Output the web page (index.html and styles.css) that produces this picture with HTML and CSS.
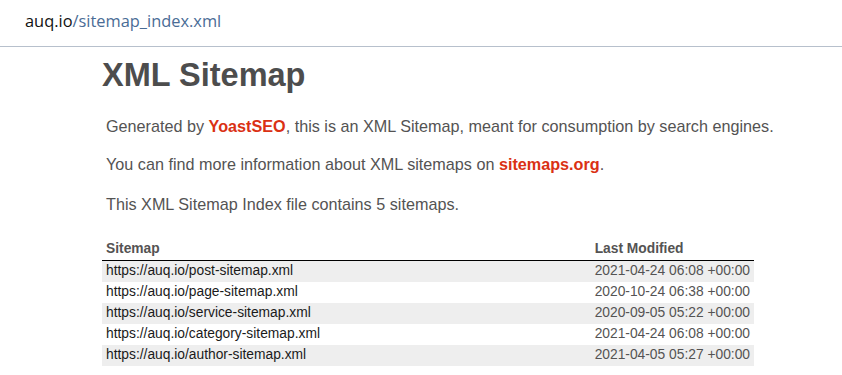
FILE: index.html
```html
<!DOCTYPE html>
<html>
<head>
<meta charset="utf-8">
<link rel="stylesheet" href="styles.css">
<title>XML Sitemap</title>
</head>
<body>
<div class="urlbar"><span class="host">auq.io</span><span class="path">/sitemap_index.xml</span></div>
<div class="content">
  <h1 class="title">XML Sitemap</h1>
  <p class="expl first">Generated by <a href="#">YoastSEO</a>, this is an XML Sitemap, meant for consumption by search engines.</p>
  <p class="expl second">You can find more information about XML sitemaps on <a href="#">sitemaps.org</a>.</p>
  <p class="expl third">This XML Sitemap Index file contains 5 sitemaps.</p>
  <table class="sitemap">
    <thead>
      <tr><th class="col-url">Sitemap</th><th class="col-date">Last Modified</th></tr>
    </thead>
    <tbody>
      <tr><td><a href="#">https://auq.io/post-sitemap.xml</a></td><td class="date">2021-04-24 06:08 +00:00</td></tr>
      <tr><td><a href="#">https://auq.io/page-sitemap.xml</a></td><td class="date">2020-10-24 06:38 +00:00</td></tr>
      <tr><td><a href="#">https://auq.io/service-sitemap.xml</a></td><td class="date">2020-09-05 05:22 +00:00</td></tr>
      <tr><td><a href="#">https://auq.io/category-sitemap.xml</a></td><td class="date">2021-04-24 06:08 +00:00</td></tr>
      <tr><td><a href="#">https://auq.io/author-sitemap.xml</a></td><td class="date">2021-04-05 05:27 +00:00</td></tr>
    </tbody>
  </table>
</div>
</body>
</html>
```
FILE: styles.css
```css
html, body {
  margin: 0;
  padding: 0;
  background: #fff;
}
body {
  font-family: "Liberation Sans", Arial, sans-serif;
  color: #545353;
}
.urlbar {
  height: 47px;
  box-sizing: border-box;
  padding: 9px 0 0 25px;
  border-bottom: 1px solid #b7c0cc;
  font-family: "Open Sans", "Noto Sans", sans-serif;
  font-size: 16.4px;
  line-height: 24px;
}
.host { color: #111; }
.path { color: #4a6c96; }
.content {
  margin: 0 0 0 102px;
}
.title {
  margin: 8px 0 0 0;
  font-size: 32.5px;
  line-height: 40px;
  font-weight: bold;
  color: #4d4d4d;
}
.expl {
  margin: 0 0 0 4px;
  font-size: 16.2px;
  line-height: 20px;
  white-space: nowrap;
}
.expl.first { padding-top: 21px; }
.expl.second { padding-top: 18px; }
.expl.third { padding-top: 20px; }
.expl a {
  color: #da3114;
  font-weight: bold;
  text-decoration: none;
}
.sitemap {
  margin-top: 25px;
  width: 652px;
  border-collapse: collapse;
  font-size: 13.8px;
}
.sitemap th {
  text-align: left;
  font-size: 13.8px;
  padding: 2px 4px 3px 4px;
  border-bottom: 1px solid #000;
  line-height: 16px;
}
.sitemap td {
  padding: 2px 4px 3px 4px;
  line-height: 16px;
  white-space: nowrap;
}
.sitemap td a { color: #1a1a1a; text-decoration: none; }
.sitemap tbody tr:nth-child(odd) td { background: #eee; }
.col-date { width: 155px; }
```
